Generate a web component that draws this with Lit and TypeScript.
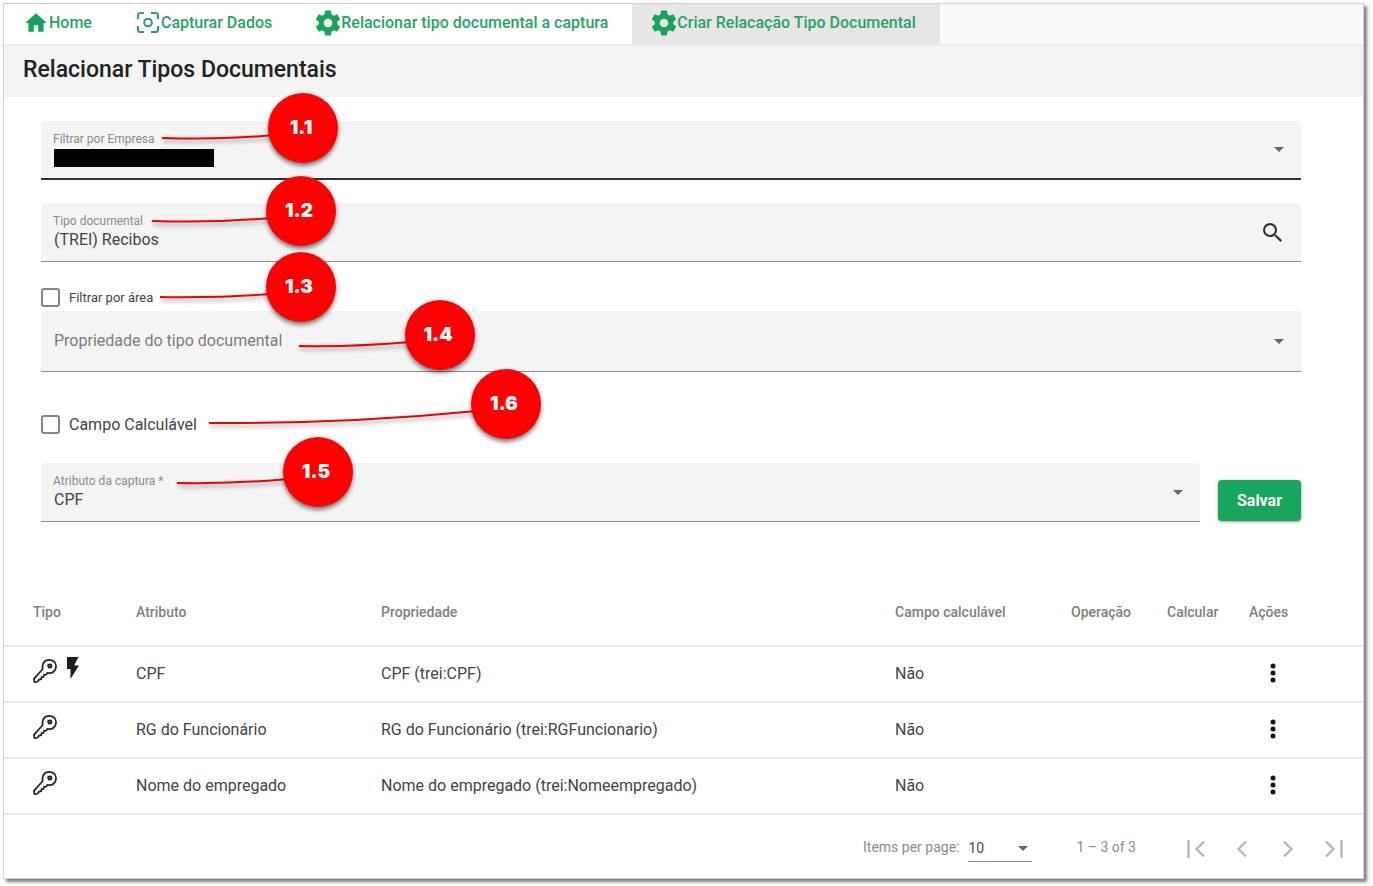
import { LitElement, html, svg, css } from "lit";
import { customElement, state } from "lit/decorators.js";

const gearPath =
  "M12 15.5A3.5 3.5 0 0 1 8.5 12 3.5 3.5 0 0 1 12 8.5 3.5 3.5 0 0 1 15.5 12 3.5 3.5 0 0 1 12 15.5M19.43 12.97C19.47 12.65 19.5 12.33 19.5 12S19.47 11.34 19.43 11L21.54 9.37C21.73 9.22 21.78 8.95 21.66 8.73L19.66 5.27C19.54 5.05 19.27 4.96 19.05 5.05L16.56 6.05C16.04 5.66 15.5 5.32 14.87 5.07L14.5 2.42C14.46 2.18 14.25 2 14 2H10C9.75 2 9.54 2.18 9.5 2.42L9.13 5.07C8.5 5.32 7.96 5.66 7.44 6.05L4.95 5.05C4.73 4.96 4.46 5.05 4.34 5.27L2.34 8.73C2.21 8.95 2.27 9.22 2.46 9.37L4.57 11C4.53 11.34 4.5 11.67 4.5 12S4.53 12.65 4.57 12.97L2.46 14.63C2.27 14.78 2.21 15.05 2.34 15.27L4.34 18.73C4.46 18.95 4.73 19.03 4.95 18.95L7.44 17.94C7.96 18.34 8.5 18.68 9.13 18.93L9.5 21.58C9.54 21.82 9.75 22 10 22H14C14.25 22 14.46 21.82 14.5 21.58L14.87 18.93C15.5 18.67 16.04 18.34 16.56 17.94L19.05 18.95C19.27 19.03 19.54 18.95 19.66 18.73L21.66 15.27C21.78 15.05 21.73 14.78 21.54 14.63L19.43 12.97Z";

const icons = {
  home: svg`<svg class="tab-icon" viewBox="0 0 24 24" aria-hidden="true"><path d="M10 20v-6h4v6h5v-8h3L12 3 2 12h3v8z"/></svg>`,
  capture: svg`<svg class="tab-icon" viewBox="0 0 26 26" aria-hidden="true"><g fill="none" stroke="currentColor" stroke-width="2"><path d="M3 9V5Q3 3 5 3H9M16 3h5Q23 3 23 5V9M23 16v4q0 2-2 2H16M9 22H5q-2 0-2-2V16"/><circle cx="13" cy="12.5" r="3.800"/></g></svg>`,
  gear: svg`<svg class="tab-icon" viewBox="1.500 1.500 21 21" aria-hidden="true"><path d=${gearPath}/></svg>`,
  arrow: svg`<svg class="arrow" viewBox="0 0 10 5" aria-hidden="true"><path d="M0 0h10L5 5z"/></svg>`,
  search: svg`<svg class="search-icon" viewBox="3 3 17.500 17.500" aria-hidden="true"><path d="M15.500 14h-.790l-.280-.270A6.471 6.471 0 0 0 16 9.500 6.500 6.500 0 1 0 9.500 16c1.610 0 3.090-.590 4.230-1.570l.270.280v.790l5 4.990L20.490 19l-4.990-5zm-6 0C7.010 14 5 11.990 5 9.500S7.010 5 9.500 5 14 7.010 14 9.500 11.990 14 9.500 14z"/></svg>`,
  key: svg`<svg class="key" viewBox="0 0 26 26" role="img" aria-label="Chave"><g fill="none" stroke="#222" stroke-width="1.800" stroke-linejoin="round"><path d="M10.200 11.400C8.800 6.400 12 1.900 16.800 1.900c4.200 0 7.200 3 7.200 6.900 0 4.500-4.200 7.900-8.900 6.700l-1.700 1.900-2.200.2-.300 2.100-2.100.300-.200 1.900-2.200.600-1.800 2.200-3 .300-.700-3.300z"/><circle cx="17.500" cy="8.200" r="1.700" fill="#777"/></g></svg>`,
  bolt: svg`<svg class="bolt" viewBox="0 0 12 22" role="img" aria-label="Automático"><path d="M0 0v12h3.500v10L12 8.500H7.200L11.500 0z"/></svg>`,
  more: svg`<svg class="more-icon" viewBox="0 0 6 20" aria-hidden="true"><circle cx="3" cy="3" r="2.500"/><circle cx="3" cy="10" r="2.500"/><circle cx="3" cy="17" r="2.500"/></svg>`,
};

const pageIcon = (d: string) =>
  svg`<svg class="page-icon" viewBox="0 0 20 18" aria-hidden="true"><path d=${d} fill="none" stroke="currentColor" stroke-width="2.400"/></svg>`;

interface Relation {
  attribute: string;
  property: string;
  calculated: string;
  automatic: boolean;
}

@customElement("app-root")
export class AppRoot extends LitElement {
  @state() private relations: Relation[] = [
    { attribute: "CPF", property: "CPF (trei:CPF)", calculated: "Não", automatic: true },
    { attribute: "RG do Funcionário", property: "RG do Funcionário (trei:RGFuncionario)", calculated: "Não", automatic: false },
    { attribute: "Nome do empregado", property: "Nome do empregado (trei:Nomeempregado)", calculated: "Não", automatic: false },
  ];

  static styles = css`
    :host {
      display: block;
      font-family: Roboto, "Liberation Sans", sans-serif;
      color: #444;
      background: #fff;
      padding: 3px 9px 8px 3px;
    }
    * { box-sizing: border-box; }
    button, select, input { font: inherit; color: inherit; margin: 0; }
    select, button, .text-input {
      appearance: none;
      border: 0;
      padding: 0;
      background: none;
    }
    .window {
      border: 1px solid #d0d0d0;
      background: #fff;
      box-shadow: 3px 3px 3px rgba(0, 0, 0, 0.5);
    }
    .tabs {
      display: flex;
      height: 42px;
      background: #fafafa;
      border-bottom: 2px solid #ececec;
    }
    .tab {
      display: flex;
      align-items: center;
      padding: 0 24px 3px 19px;
      background: #fff;
      color: #2ba267;
      font-size: 16px;
      font-weight: 500;
      text-decoration: none;
      white-space: nowrap;
    }
    .tab.active { background: #e6e6e6; }
    .tab-icon { width: 26px; height: 26px; fill: #17a35a; flex: none; }
    .title {
      margin: 0;
      padding: 10px 19px 13px;
      background: #f4f4f4;
      color: #222;
      font-size: 23px;
      line-height: 28px;
      font-weight: 500;
    }
    .form { position: relative; padding: 24px 62px 0 37px; }
    .field {
      position: relative;
      display: flex;
      align-items: center;
      height: 59px;
      padding: 0 17px 0 12px;
      background: #f4f4f4;
      border-bottom: 1px solid #8e8e8e;
      border-radius: 4px 4px 0 0;
    }
    .field.focused { border-bottom: 2px solid #333; }
    .field.searchable { padding-right: 19px; }
    .field + .field { margin-top: 23px; }
    .stack { flex: 1; display: flex; flex-direction: column; min-width: 0; }
    .caption { color: #8c8c8c; font-size: 12px; line-height: 16px; }
    .value.value { width: 100%; height: 22px; padding-left: 1px; font-size: 16px; line-height: 22px; }
    .placeholder { color: #7c7c7c; }
    .redaction {
      position: absolute;
      left: 13px;
      top: 28px;
      width: 160px;
      height: 18px;
      background: #000;
    }
    .arrow { width: 10px; height: 5px; fill: #666; flex: none; pointer-events: none; }
    .search-icon { display: block; width: 19px; height: 19px; fill: #333; }
    .check { display: flex; align-items: center; gap: 9px; height: 20px; }
    .check input {
      appearance: none;
      width: 19px;
      height: 19px;
      border: 2px solid #858585;
      border-radius: 3px;
      background: #fff;
    }
    .area { margin: 25px 0 4px; font-size: 13px; }
    .calc { margin: 42px 0 29px; font-size: 16px; }
    .tall { height: 61px; }
    .save-row { display: flex; align-items: flex-end; gap: 18px; }
    .save-row .field { flex: 1; }
    .save {
      width: 83px;
      height: 41px;
      margin-bottom: 1px;
      border-radius: 4px;
      background: #17a65b;
      box-shadow: 0 1px 3px rgba(0, 0, 0, 0.4);
      color: #fff;
      font-size: 16px;
      font-weight: 700;
    }
    .leaders {
      position: absolute;
      left: 0;
      top: 0;
      width: 560px;
      height: 430px;
      overflow: visible;
      pointer-events: none;
      fill: none;
      stroke: #f00000;
      stroke-width: 2;
      filter: drop-shadow(1px 3px 2px rgba(0, 0, 0, 0.35));
    }
    .marker {
      position: absolute;
      width: 70px;
      height: 70px;
      border-radius: 50%;
      background: #f00;
      box-shadow: 0 3px 4px rgba(0, 0, 0, 0.5);
      color: #fff;
      font-family: Inter, sans-serif;
      font-size: 19px;
      line-height: 69px;
      font-weight: 900;
      text-align: center;
      padding-right: 4px;
    }
    .m1 { left: 264px; top: -4px; }
    .m2 { left: 262px; top: 79px; }
    .m3 { left: 262px; top: 155px; }
    .m4 { left: 401px; top: 203px; }
    .m6 { left: 467px; top: 272px; }
    .m5 { left: 279px; top: 340px; }
    table {
      width: 100%;
      margin-top: 56px;
      border-collapse: collapse;
      table-layout: fixed;
      font-size: 16px;
    }
    th, td {
      height: 56px;
      padding: 0 0 2px;
      border-bottom: 2px solid #e8e8e8;
      text-align: left;
      white-space: nowrap;
    }
    th { height: 68px; padding: 0; color: #808080; font-size: 14px; font-weight: 500; }
    th:first-child, td:first-child { padding-left: 29px; }
    .c-type { width: 132px; }
    .c-attr { width: 245px; }
    .c-calc { width: 176px; }
    .c-op { width: 96px; }
    .c-run { width: 82px; }
    .c-act { width: 114px; }
    .kinds { display: flex; align-items: flex-start; gap: 9px; height: 32px; }
    .key { width: 25px; height: 25px; margin-top: 1px; }
    .bolt { width: 12px; height: 22px; fill: #1c1c1c; }
    .more { display: flex; width: 48px; height: 32px; align-items: center; justify-content: center; }
    .more-icon { width: 6px; height: 20px; fill: #111; }
    .paginator {
      display: flex;
      align-items: center;
      justify-content: flex-end;
      height: 63px;
      padding: 4px 6px 0 0;
      color: #8c8c8c;
      font-size: 14px;
      line-height: 20px;
    }
    .paginator > label, .range { padding-bottom: 3px; }
    .page-size {
      display: flex;
      align-items: center;
      width: 64px;
      height: 27px;
      margin: 0 44px 0 9px;
      padding-right: 4px;
      border-bottom: 1px solid #8e8e8e;
      color: #4a4a4a;
    }
    .page-size select { flex: 1; }
    .range { margin-right: 37px; }
    .page { display: flex; align-items: center; justify-content: center; width: 46px; height: 40px; color: #b8b8b8; }
    .page-icon { width: 20px; height: 18px; }
  `;

  private tab(icon: unknown, label: string, active = false) {
    return html`<a class="tab ${active ? "active" : ""}" href="#" aria-current=${active ? "page" : "false"}>${icon}<span>${label}</span></a>`;
  }

  render() {
    return html`
      <div class="window">
        <nav class="tabs">
          ${this.tab(icons.home, "Home")}
          ${this.tab(icons.capture, "Capturar Dados")}
          ${this.tab(icons.gear, "Relacionar tipo documental a captura")}
          ${this.tab(icons.gear, "Criar Relacação Tipo Documental", true)}
        </nav>
        <h1 class="title">Relacionar Tipos Documentais</h1>
        <form class="form" @submit=${(e: Event) => e.preventDefault()}>
          <div class="field focused">
            <div class="stack">
              <label class="caption" for="company">Filtrar por Empresa</label>
              <select class="value" id="company"><option></option></select>
            </div>
            <span class="redaction"></span>
            ${icons.arrow}
          </div>
          <div class="field searchable">
            <div class="stack">
              <label class="caption" for="doctype">Tipo documental</label>
              <input class="value text-input" id="doctype" value="(TREI) Recibos" />
            </div>
            <button type="button" aria-label="Pesquisar">${icons.search}</button>
          </div>
          <label class="check area"><input type="checkbox" />Filtrar por área</label>
          <div class="field tall">
            <div class="stack">
              <select class="value placeholder" aria-label="Propriedade do tipo documental">
                <option>Propriedade do tipo documental</option>
              </select>
            </div>
            ${icons.arrow}
          </div>
          <label class="check calc"><input type="checkbox" />Campo Calculável</label>
          <div class="save-row">
            <div class="field">
              <div class="stack">
                <label class="caption" for="attribute">Atributo da captura *</label>
                <select class="value" id="attribute"><option>CPF</option></select>
              </div>
              ${icons.arrow}
            </div>
            <button class="save">Salvar</button>
          </div>
          <svg class="leaders" viewBox="0 0 560 430" aria-hidden="true">
            <path d="M158 41Q220 43 270 38" />
            <path d="M148 124Q210 126 268 121" />
            <path d="M156 200Q210 201 268 197" />
            <path d="M295 249Q350 250 407 245" />
            <path d="M205 326Q340 327 473 314" />
            <path d="M173 386Q230 387 285 382" />
          </svg>
          <span class="marker m1">1.1</span>
          <span class="marker m2">1.2</span>
          <span class="marker m3">1.3</span>
          <span class="marker m4">1.4</span>
          <span class="marker m6">1.6</span>
          <span class="marker m5">1.5</span>
        </form>
        <table>
          <thead>
            <tr>
              <th class="c-type">Tipo</th>
              <th class="c-attr">Atributo</th>
              <th>Propriedade</th>
              <th class="c-calc">Campo calculável</th>
              <th class="c-op">Operação</th>
              <th class="c-run">Calcular</th>
              <th class="c-act">Ações</th>
            </tr>
          </thead>
          <tbody>
            ${this.relations.map(
              (r) => html`<tr>
                <td><div class="kinds">${icons.key}${r.automatic ? icons.bolt : ""}</div></td>
                <td>${r.attribute}</td>
                <td>${r.property}</td>
                <td>${r.calculated}</td>
                <td></td>
                <td></td>
                <td><button class="more" aria-label="Ações">${icons.more}</button></td>
              </tr>`
            )}
          </tbody>
        </table>
        <div class="paginator">
          <label for="size">Items per page:</label>
          <div class="page-size"><select id="size"><option>10</option></select>${icons.arrow}</div>
          <span class="range">1 – 3 of 3</span>
          <button class="page" aria-label="Primeira página">${pageIcon("M2.500 0V18M18 1.500L10.500 9l7.500 7.500")}</button>
          <button class="page" aria-label="Página anterior">${pageIcon("M14 1.500L6.500 9l7.500 7.500")}</button>
          <button class="page" aria-label="Próxima página">${pageIcon("M6 1.500L13.500 9 6 16.500")}</button>
          <button class="page" aria-label="Última página">${pageIcon("M2 1.500L9.500 9 2 16.500M17.500 0V18")}</button>
        </div>
      </div>
    `;
  }
}
